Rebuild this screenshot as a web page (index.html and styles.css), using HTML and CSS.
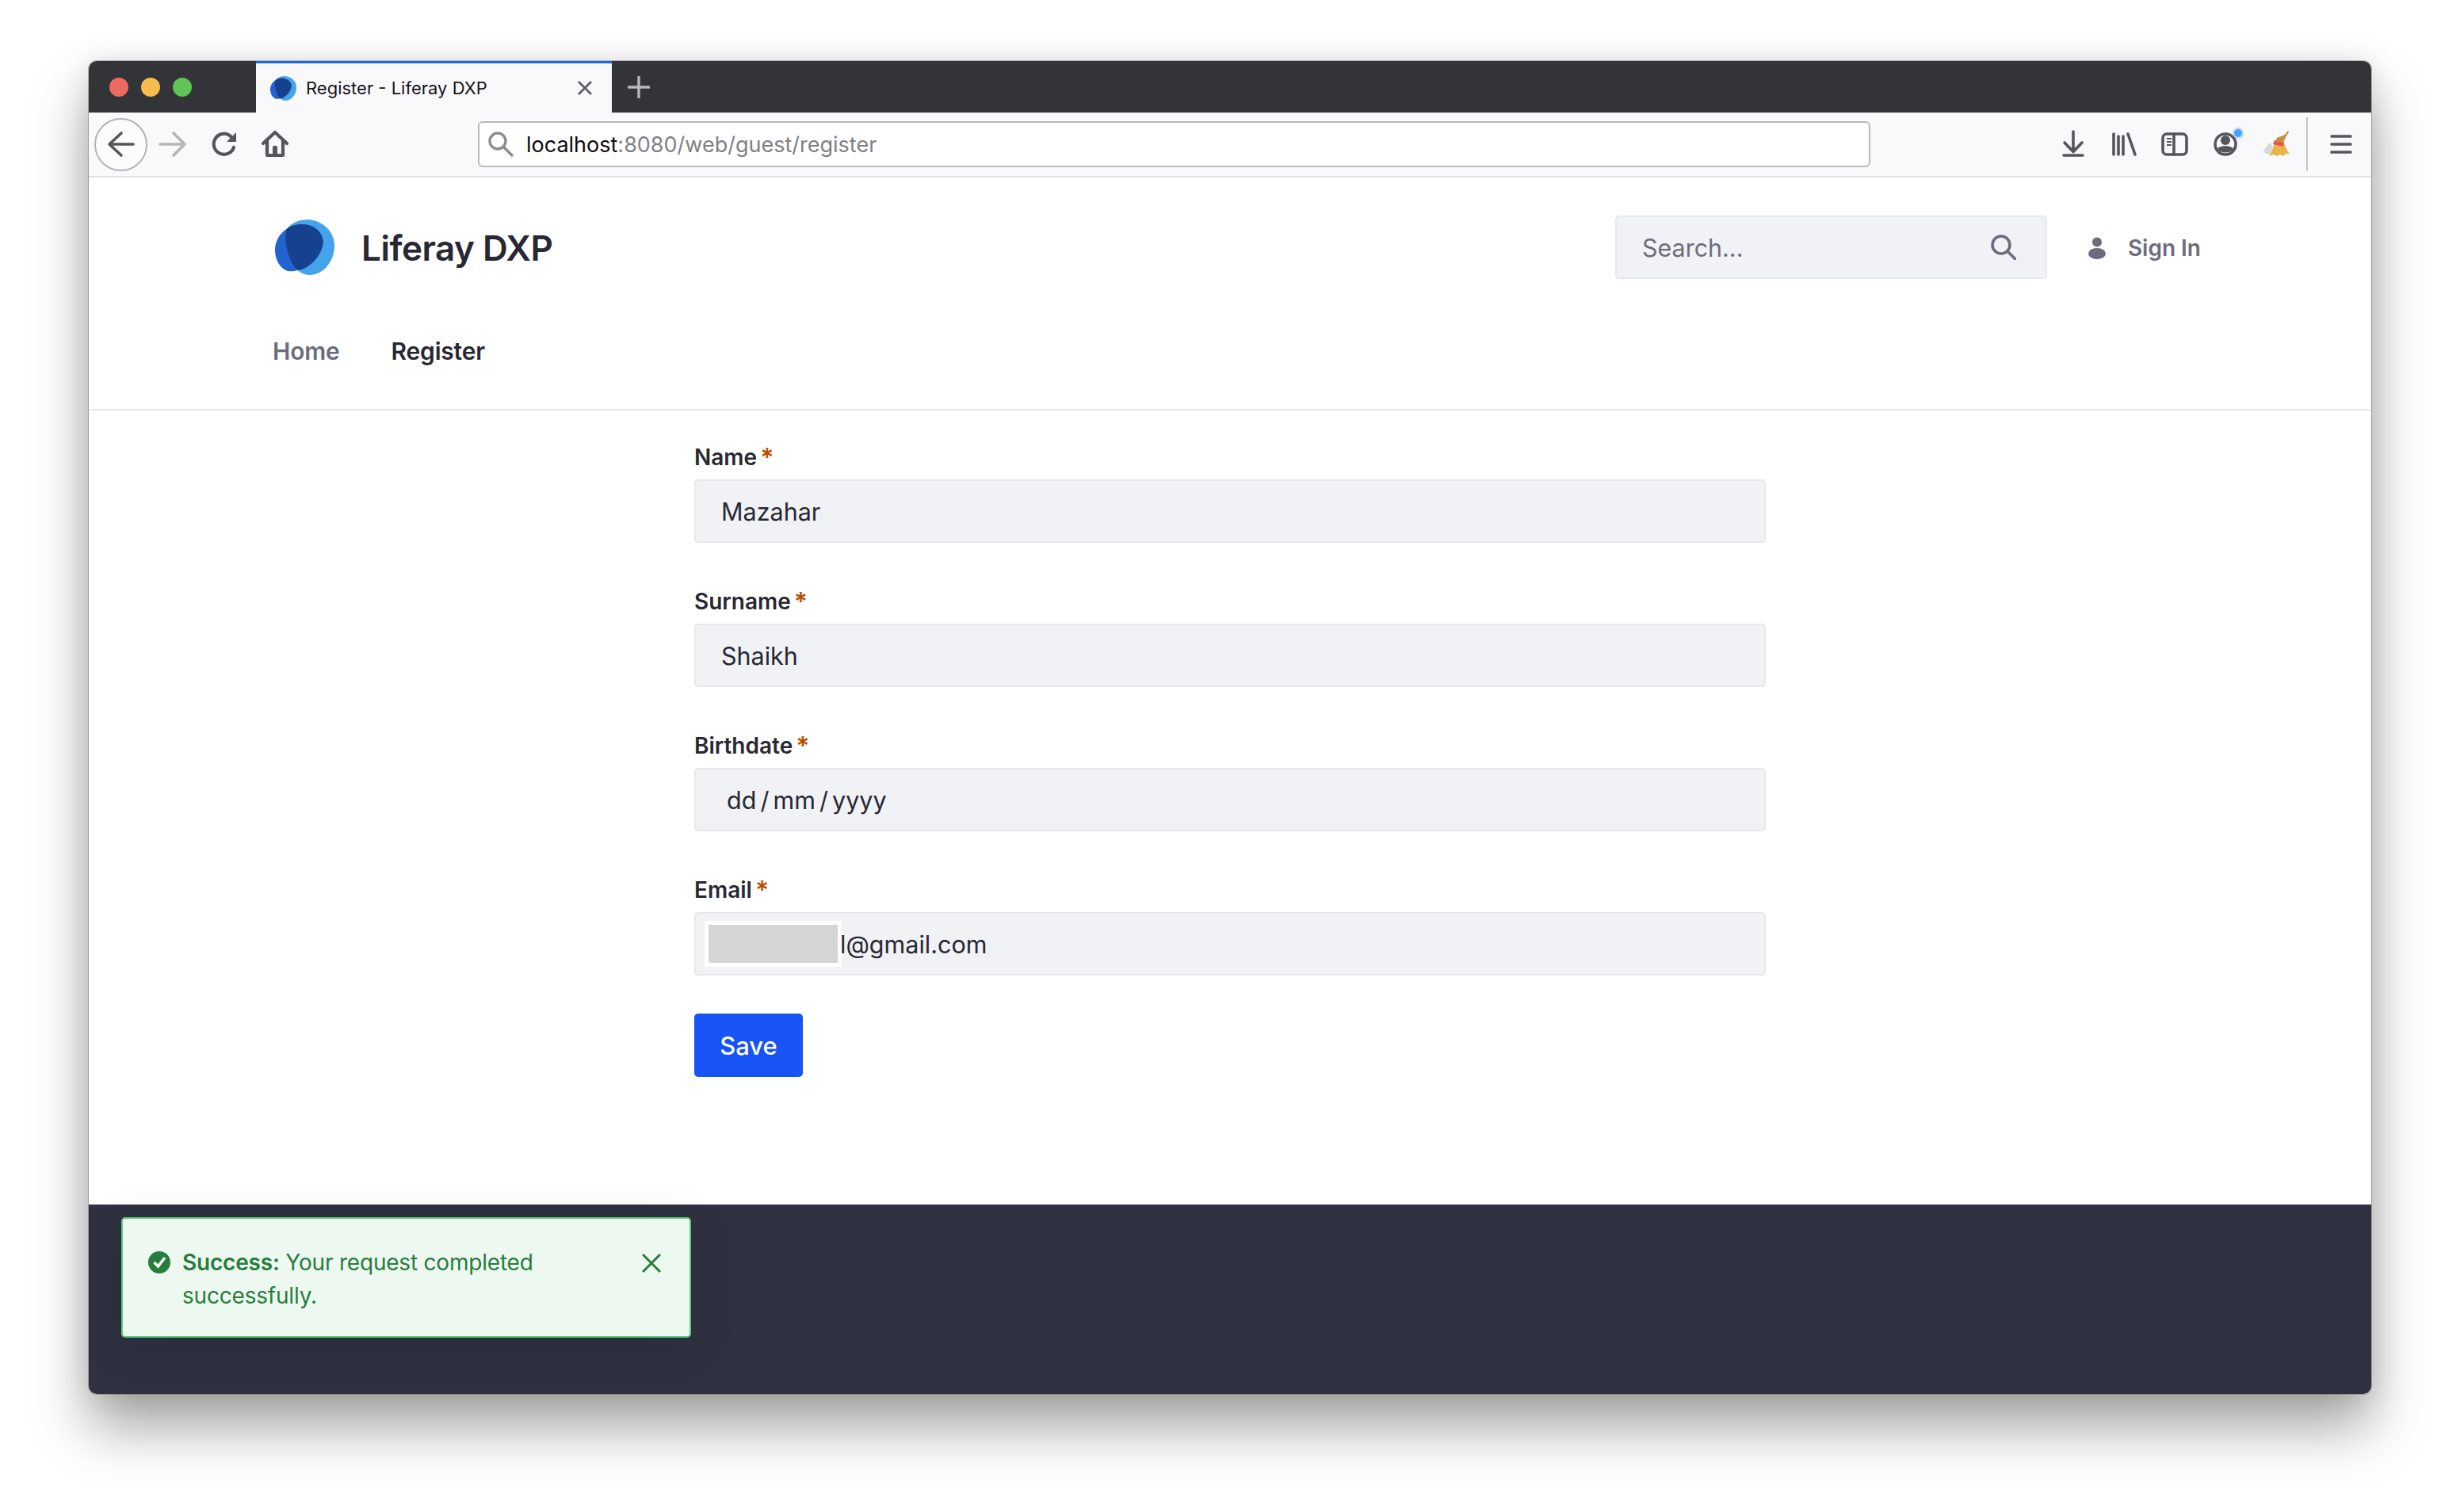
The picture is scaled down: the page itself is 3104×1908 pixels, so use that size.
FILE: index.html
```html
<!DOCTYPE html>
<html>
  <head>
    <title>Register - Liferay DXP</title>
    <link rel="stylesheet" href="styles.css">
  </head>
  <body>
    <svg class="defs" width="0" height="0">
      <symbol id="logo" viewBox="0 0 225 210">
        <path fill="#45a3ec" d="M45 35C65 10 95 0 125 0C175 3 225 40 225 100C225 150 190 210 130 210C110 210 95 200 85 192C55 165 30 85 45 35Z"/>
        <path fill="#2363cf" d="M45 35C60 22 85 18 105 18C150 20 182 50 182 85C182 130 130 190 85 192C65 198 45 198 30 185C10 170 0 140 0 115C0 80 20 50 45 35Z"/>
        <path fill="#15418f" d="M45 35C60 22 85 18 105 18C150 20 182 50 182 85C182 130 130 190 85 192C55 165 30 85 45 35Z"/>
      </symbol>
    </svg>

    <div class="window">
      <div class="tabbar">
        <div class="lights">
          <span class="light light-red"></span>
          <span class="light light-yellow"></span>
          <span class="light light-green"></span>
        </div>
        <div class="tab">
          <svg class="favicon"><use href="#logo"/></svg>
          <span class="tab-title">Register - Liferay DXP</span>
          <svg class="tab-close" viewBox="0 0 20 20"><path d="M2 2L18 18M18 2L2 18"/></svg>
        </div>
        <svg class="new-tab" viewBox="0 0 28 28"><path d="M14 1V27M1 14H27"/></svg>
      </div>

      <div class="toolbar">
        <div class="back-btn">
          <svg class="icon" viewBox="0 0 36 36"><path d="M3 18H33M18 4L3 18L18 32"/></svg>
        </div>
        <div class="tool-btn">
          <svg class="icon icon-off" viewBox="0 0 36 36"><path d="M2 18H33M19 4L33 18L19 32"/></svg>
        </div>
        <div class="tool-btn">
          <svg class="icon icon-bold" viewBox="0 0 36 36"><path d="M30 22A13 13 0 1 1 25 7L30 12"/><path class="solid" d="M33 3V15H21Z"/></svg>
        </div>
        <div class="tool-btn">
          <svg class="icon icon-bold" viewBox="0 0 36 36"><path d="M3 17L18 3L33 17M8 13V32H28V13"/><path class="solid" d="M15 32V22C15 19 21 19 21 22V32Z"/></svg>
        </div>

        <div class="urlbar">
          <svg class="url-search" viewBox="0 0 32 32"><circle cx="12" cy="12" r="10"/><path d="M19 19L30 30"/></svg>
          <span class="url-text"><span class="url-host">localhost</span>:8080/web/guest/register</span>
        </div>

        <div class="tool-group">
          <div class="tool-btn">
            <svg class="icon" viewBox="0 0 36 36"><path d="M18 2V27M7 16L18 27.5L29 16M6 32H30"/></svg>
          </div>
          <div class="tool-btn">
            <svg class="icon" viewBox="0 0 36 36"><path d="M5 5V31M11 8V31M17 8V31M23 5L32 31"/></svg>
          </div>
          <div class="tool-btn">
            <svg class="icon" viewBox="0 0 36 36"><rect x="3" y="5" width="30" height="26" rx="5"/><path d="M17 5V31"/><path class="thin" d="M8 11H14M8 15H14M8 19H14"/></svg>
          </div>
          <div class="tool-btn">
            <svg class="icon icon-open" viewBox="0 0 36 36">
              <circle cx="18" cy="18" r="13"/>
              <circle class="solid" cx="18" cy="13" r="6"/>
              <path class="solid" d="M8 24C10 19 26 19 28 24C24 30 12 30 8 24Z"/>
              <circle class="dot-halo" cx="34" cy="4" r="7.5"/>
              <circle class="dot" cx="34" cy="4" r="5"/>
            </svg>
          </div>
          <div class="tool-btn">
            <svg class="broom" viewBox="0 0 36 36">
              <path fill="#d4dcd4" d="M2 26L9 16L14 20L11 31L5 30Z"/>
              <path fill="#e8b54d" d="M16 13L28 16C29 21 33 27 35 31L30 30L27 33L23 31L19 33L15 31L9 33C13 28 15 20 16 13Z"/>
              <path fill="#e8574f" d="M16 13L28 16L27 21L14 18Z"/>
              <path fill="#c78f3b" d="M19 10L29 6L33 1L34 3L30 9L27 16L17 14Z"/>
            </svg>
          </div>
          <div class="tool-sep"></div>
          <div class="tool-btn">
            <svg class="icon" viewBox="0 0 36 36"><path d="M6 8H30M6 18H30M6 28H30"/></svg>
          </div>
        </div>
      </div>

      <header class="site-header">
        <div class="header-top">
          <a class="brand">
            <svg class="brand-logo"><use href="#logo"/></svg>
            <span class="brand-name">Liferay DXP</span>
          </a>
          <div class="search">
            <span class="search-text">Search...</span>
            <svg class="search-icon" viewBox="0 0 32 32"><circle cx="13" cy="13" r="11"/><path d="M21 21L31 31"/></svg>
          </div>
          <a class="sign-in">
            <svg class="user-icon" viewBox="0 0 22 28"><circle cx="11" cy="6.5" r="6"/><ellipse cx="11" cy="21" rx="11" ry="7"/></svg>
            <span>Sign In</span>
          </a>
        </div>
        <nav class="nav">
          <a class="nav-link">Home</a>
          <a class="nav-link nav-active">Register</a>
        </nav>
      </header>

      <main class="main">
        <form class="form" action="">
          <div class="field">
            <label class="label">Name <span class="req">*</span></label>
            <div class="input">Mazahar</div>
          </div>
          <div class="field">
            <label class="label">Surname <span class="req">*</span></label>
            <div class="input">Shaikh</div>
          </div>
          <div class="field">
            <label class="label">Birthdate <span class="req">*</span></label>
            <div class="input input-date">dd / mm / yyyy</div>
          </div>
          <div class="field">
            <label class="label">Email <span class="req">*</span></label>
            <div class="input input-email"><span class="redact"></span>l@gmail.com</div>
          </div>
          <button class="save">Save</button>
        </form>
      </main>

      <footer class="footer">
        <div class="toast">
          <svg class="toast-check" viewBox="0 0 28 28"><circle cx="14" cy="14" r="14"/><path d="M7.5 14L12.5 19L21 8"/></svg>
          <p class="toast-text"><strong>Success:</strong> <span>Your request completed</span><br><span>successfully.</span></p>
          <svg class="toast-close" viewBox="0 0 24 24"><path d="M1 1L23 23M23 1L1 23"/></svg>
        </div>
      </footer>
    </div>
  </body>
</html>
```

FILE: styles.css
```css
* { box-sizing: border-box; }

body { margin: 0; padding: 77px 112px 149px; background: #fff; font-family: Inter, "Noto Sans", sans-serif; color: #272833; }

.defs { position: absolute; }

.window { width: 2880px; height: 1682px; display: flex; flex-direction: column; border-radius: 10px; overflow: hidden; background: #fff; }
.window { box-shadow: 0 0 0 1px rgba(0, 0, 0, 0.22), 0 42px 70px rgba(0, 0, 0, 0.36), 0 0 36px rgba(0, 0, 0, 0.1); }

/* browser chrome */
.tabbar { height: 65px; flex: none; display: flex; align-items: center; background: #333438; }
.lights { width: 211px; display: flex; gap: 16px; padding-left: 26px; }
.light { width: 24px; height: 24px; border-radius: 50%; }
.light-red { background: #ee6a5f; }
.light-yellow { background: #f5bd4f; }
.light-green { background: #61c454; }
.tab { width: 449px; height: 65px; display: flex; align-items: center; padding: 0 24px 0 18px; background: #f9f9fb; border-top: 3px solid #1f66dc; }
.favicon { width: 33px; height: 31px; flex: none; }
.tab-title { margin-left: 12px; font-size: 22px; color: #15141a; }
.tab-close { width: 20px; height: 20px; margin-left: auto; fill: none; stroke: #5b5b5f; stroke-width: 2.6; }
.new-tab { width: 28px; height: 28px; margin-left: 20px; fill: none; stroke: #b9b9bc; stroke-width: 3.4; stroke-linecap: round; }

.toolbar { height: 82px; flex: none; display: flex; align-items: center; padding-left: 7px; background: #f9f9fb; border-bottom: 2px solid #e2e2e4; }
.back-btn { width: 67px; height: 67px; flex: none; display: flex; align-items: center; justify-content: center; border: 2px solid #b4b4b6; border-radius: 50%; background: #fcfcfd; }
.tool-btn { width: 64px; height: 64px; flex: none; display: flex; align-items: center; justify-content: center; }
.icon { width: 36px; height: 36px; fill: none; stroke: #55555a; stroke-width: 3.6; stroke-linecap: round; stroke-linejoin: round; }
.icon-bold { stroke-width: 4.2; margin-left: 2px; }
.icon-off { stroke: #b6b6b8; }
.icon-open { overflow: visible; }
.icon .solid { fill: #55555a; stroke: none; }
.icon .thin { stroke-width: 2.2; stroke-linecap: butt; }
.icon .dot { fill: #45a1ff; stroke: none; }
.icon .dot-halo { fill: rgba(69, 161, 255, 0.28); stroke: none; }
.broom { width: 36px; height: 36px; }

.urlbar { width: 1757px; height: 58px; flex: none; display: flex; align-items: center; margin-left: 225px; padding-left: 11px; background: #fff; border: 2px solid #b9b9bb; border-radius: 6px; }
.url-search { width: 32px; height: 32px; fill: none; stroke: #8d8d8f; stroke-width: 3.4; stroke-linecap: round; }
.url-text { margin-left: 16px; font-size: 27px; color: #808084; }
.url-host { color: #0c0c0d; }

.tool-group { display: flex; align-items: center; margin-left: auto; padding-right: 6px; }
.tool-sep { width: 2px; height: 68px; margin: 0 10px 0 6px; background: #c6c6c8; }

/* site header */
.site-header { height: 294px; flex: none; padding: 48px 0 0 232px; background: #fff; border-bottom: 2px solid #e7e7ed; }
.header-top { display: flex; align-items: center; height: 80px; padding-right: 215px; }
.brand { display: flex; align-items: center; }
.brand-logo { width: 75px; height: 70px; margin-left: 3px; }
.brand-name { margin-left: 34px; padding-top: 2px; font-size: 44px; font-weight: 600; letter-spacing: -0.5px; }
.search { width: 545px; height: 80px; display: flex; align-items: center; margin-left: auto; padding: 0 37px 0 32px; background: #f1f2f5; border: 2px solid #e7e7ed; border-radius: 5px; }
.search-text { font-size: 30.5px; color: #6b6c7e; }
.search-icon { width: 32px; height: 32px; margin-left: auto; fill: none; stroke: #6b6c7e; stroke-width: 3.6; stroke-linecap: round; }
.sign-in { display: flex; align-items: center; margin-left: 52px; padding-top: 2px; font-size: 28px; font-weight: 600; color: #6b6c7e; }
.user-icon { width: 22px; height: 28px; margin-right: 28px; fill: #6b6c7e; }
.nav { display: flex; gap: 65px; margin-top: 71px; font-size: 30px; font-weight: 600; line-height: 40px; letter-spacing: -0.2px; }
.nav-link { color: #6b6c7e; }
.nav-active { color: #272833; }

/* form */
.main { flex: 1; padding: 41px 0 0 764px; background: #fff; }
.form { width: 1352px; }
.field + .field { margin-top: 56px; }
.label { display: block; height: 36px; margin-bottom: 10px; font-size: 28px; font-weight: 600; line-height: 36px; }
.req { margin-left: -3px; font-size: 32px; line-height: 20px; vertical-align: -2px; color: #b95000; }
.input { height: 80px; display: flex; align-items: center; padding-left: 32px; background: #f1f2f5; border: 2px solid #e7e7ed; border-radius: 5px; font-size: 30.5px; }
.input-date { padding-left: 39px; word-spacing: -3.5px; }
.input-email { padding-left: 11px; }
.redact { width: 173px; height: 58px; flex: none; margin-right: -2px; background: #d5d5d5; border: 5px solid #fff; }
.save { display: block; width: 137px; height: 80px; margin-top: 48px; padding: 0; background: #1753f5; border: none; border-radius: 5px; color: #fff; font-family: inherit; font-size: 31px; font-weight: 500; }

/* footer + toast */
.footer { height: 239px; flex: none; padding: 16px 0 0 41px; background: #2f3140; }
.toast { width: 719px; height: 152px; display: flex; align-items: flex-start; padding: 34px 36px 0 32px; background: #edf9f0; border: 2px solid #5ace7d; border-radius: 5px; color: #287d3c; box-shadow: 0 10px 60px rgba(0, 0, 0, 0.12); }
.toast-check { width: 28px; height: 28px; flex: none; margin-top: 7px; fill: #287d3c; }
.toast-check path { fill: none; stroke: #edf9f0; stroke-width: 3.6; }
.toast-text { width: 500px; margin: 0 0 0 15px; font-size: 28px; line-height: 42px; letter-spacing: -0.2px; }
.toast-text strong { font-weight: 600; }
.toast-close { width: 24px; height: 24px; flex: none; margin: 10px 0 0 auto; fill: none; stroke: #287d3c; stroke-width: 3; }
```
